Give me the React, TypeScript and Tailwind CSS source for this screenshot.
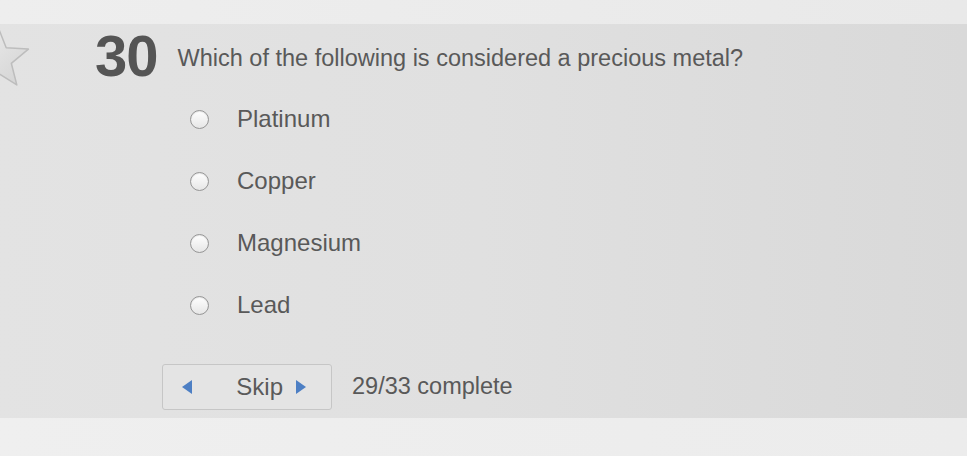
import React from "react";

const options = ["Platinum", "Copper", "Magnesium", "Lead"];

function Star() {
    // outline star, half hidden off the left edge
    const cx = 34;
    const cy = 34;
    const pts: string[] = [];
    for (let i = 0; i < 10; i++) {
        const r = i % 2 === 0 ? 32 : 14;
        const a = (-90 + i * 36) * (Math.PI / 180);
        pts.push(`${(cx + r * Math.cos(a)).toFixed(1)},${(cy + r * Math.sin(a)).toFixed(1)}`);
    }
    return (
        <svg width="68" height="68" viewBox="0 0 68 68" className="-ml-[36px] mt-[-2px] shrink-0">
            <defs>
                <linearGradient id="starFill" x1="0" y1="0" x2="1" y2="1">
                    <stop offset="0" stopColor="#efefef" />
                    <stop offset="1" stopColor="#d2d2d2" />
                </linearGradient>
            </defs>
            <polygon points={pts.join(" ")} fill="url(#starFill)" stroke="#bdbdbd" strokeWidth="1.5" strokeLinejoin="round" />
        </svg>
    );
}

function Radio() {
    return (
        <span className="w-[19px] h-[19px] rounded-full border-[1.5px] border-[#959595] bg-gradient-to-b from-[#ffffff] to-[#e6e6e6] shadow-[inset_0_1px_1px_rgba(0,0,0,0.1)] shrink-0" />
    );
}

export default function App() {
    return (
        <div
            className="w-[967px] h-[456px] overflow-hidden bg-[#ececec] flex flex-col text-[#595959]"
            style={{ fontFamily: '"Liberation Sans", Arial, sans-serif' }}
        >
            <div className="h-[24px] shrink-0 bg-gradient-to-r from-[#eeeeee] to-[#e9e9e9]" />

            <div className="h-[394px] shrink-0 bg-gradient-to-r from-[#e3e3e3] via-[#e0e0e0] to-[#d9d9d9] flex flex-col">
                <div className="h-[61px] flex items-start pt-[3px]">
                    <Star />
                    <span className="ml-[63px] text-[58px] leading-none font-bold text-[#555555] tracking-[-1px]">30</span>
                    <span className="ml-[20px] mt-[20px] text-[23.5px] leading-none">
                        Which of the following is considered a precious metal?
                    </span>
                </div>

                <div className="flex flex-col mt-[3px] pl-[190px]">
                    {options.map((opt) => (
                        <label key={opt} className="h-[62px] flex items-center">
                            <Radio />
                            <span className="ml-[28px] text-[24px]">{opt}</span>
                        </label>
                    ))}
                </div>

                <div className="flex items-center mt-[28px] pl-[162px]">
                    <button className="w-[170px] h-[46px] border border-[#c6c6c6] rounded-[3px] bg-[#e4e4e4] flex items-center pl-[19px] pr-[25px]">
                        <span className="w-0 h-0 border-y-[7px] border-y-transparent border-r-[10px] border-r-[#4d7fc4]" />
                        <span className="ml-auto text-[24px] text-[#5a5a5a]">Skip</span>
                        <span className="ml-[13px] w-0 h-0 border-y-[7px] border-y-transparent border-l-[10px] border-l-[#4d7fc4]" />
                    </button>
                    <span className="ml-[20px] text-[23.5px]">29/33 complete</span>
                </div>
            </div>

            <div className="flex-1 bg-gradient-to-r from-[#efefef] to-[#ececec]" />
        </div>
    );
}
